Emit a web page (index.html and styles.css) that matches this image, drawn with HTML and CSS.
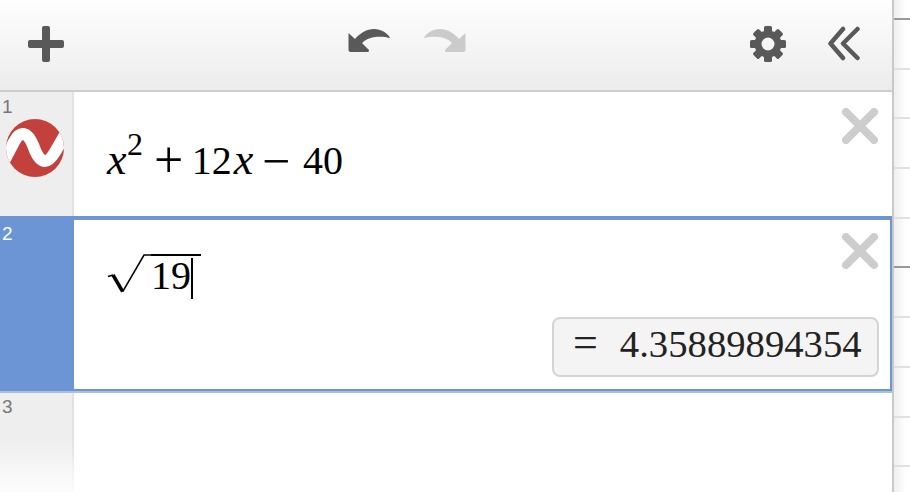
FILE: index.html
```html
<!DOCTYPE html>
<html lang="en">
<head>
<meta charset="utf-8">
<title>Expression list</title>
<link rel="stylesheet" href="styles.css">
</head>
<body>
<div class="app">
  <section class="panel">
    <header class="toolbar">
      <svg class="icon" width="36" height="36" viewBox="0 0 36 36"><path class="ink" d="M14 2a2 2 0 0 1 2-2h4a2 2 0 0 1 2 2v12h12a2 2 0 0 1 2 2v4a2 2 0 0 1-2 2H22v12a2 2 0 0 1-2 2h-4a2 2 0 0 1-2-2V22H2a2 2 0 0 1-2-2v-4a2 2 0 0 1 2-2h12z"/></svg>
      <div class="history">
        <svg class="icon" width="44" height="26" viewBox="0 0 44 26"><path class="ink" d="M1.500 5L8 11C13 5 20 1 27 1C34 1 40 5 43 9.500L42.500 10C38 8.500 33 8.500 28 9C23 9.500 18 12 15 15L22 22L21.500 24H3.500C2 24 1.500 23 1.500 21.500Z"/></svg>
        <svg class="icon" width="44" height="26" viewBox="0 0 44 26"><path class="ink-off" d="M42.500 5L36 11C31 5 24 1 17 1C10 1 4 5 1 9.500L1.500 10C6 8.500 11 8.500 16 9C21 9.500 26 12 29 15L22 22L22.500 24H40.500C42 24 42.500 23 42.500 21.500Z"/></svg>
      </div>
      <div class="tools">
        <svg class="icon" width="36" height="36" viewBox="0 0 36 36">
          <g class="ink">
            <rect x="14" y="0" width="8" height="8" rx="1.500"/>
            <rect x="14" y="0" width="8" height="8" rx="1.500" transform="rotate(45 18 18)"/>
            <rect x="14" y="0" width="8" height="8" rx="1.500" transform="rotate(90 18 18)"/>
            <rect x="14" y="0" width="8" height="8" rx="1.500" transform="rotate(135 18 18)"/>
            <rect x="14" y="0" width="8" height="8" rx="1.500" transform="rotate(180 18 18)"/>
            <rect x="14" y="0" width="8" height="8" rx="1.500" transform="rotate(225 18 18)"/>
            <rect x="14" y="0" width="8" height="8" rx="1.500" transform="rotate(270 18 18)"/>
            <rect x="14" y="0" width="8" height="8" rx="1.500" transform="rotate(315 18 18)"/>
          </g>
          <circle class="gear-ring" cx="18" cy="18" r="10"/>
        </svg>
        <svg class="icon" width="33" height="36" viewBox="0 0 33 36"><path class="chev" d="M15 3 2.500 17.500 15 32M29.500 3 15 17.500 29.500 32"/></svg>
      </div>
    </header>
    <div class="row row-1">
      <div class="gutter">
        <span class="num">1</span>
        <svg class="logo" width="58" height="58" viewBox="0 0 58 58"><defs><clipPath id="disc"><circle cx="29" cy="29" r="29"/></clipPath></defs><circle cx="29" cy="29" r="29" fill="#c4403c"/><path clip-path="url(#disc)" d="M-2 42L8 23C11 17 14 15 17 15C21 15 24 19 27 26C30 35 34 42 39 42C43 42 46 38 49 33L60 14" fill="none" stroke="#fff" stroke-width="12"/></svg>
      </div>
      <div class="body">
        <div class="math"><i class="var">x</i><span class="sup">2</span><span class="op plus-op">+</span><span class="num-12">12</span><i class="var var-2">x</i><span class="op minus-op">−</span><span class="num-40">40</span></div>
        <svg class="close" width="36" height="36" viewBox="0 0 36 36"><path d="M4 4l28 28M32 4 4 32"/></svg>
      </div>
    </div>
    <div class="row row-2">
      <div class="gutter"><span class="num">2</span></div>
      <div class="body">
        <div class="root">
          <svg class="radical" width="45" height="41" viewBox="0 0 45 41"><path class="rad-thin" d="M2 22.500 7 21M16.700 37.700 38 1H45"/><path class="rad-thick" d="M7 21 16.700 37.700"/></svg>
          <span class="radicand">19<span class="caret"></span></span>
        </div>
        <svg class="close close-2" width="36" height="36" viewBox="0 0 36 36"><path d="M4 4l28 28M32 4 4 32"/></svg>
        <div class="result"><span class="eq">=</span><span>4.35889894354</span></div>
      </div>
    </div>
    <div class="row row-3">
      <div class="gutter"><span class="num">3</span></div>
      <div class="body"></div>
    </div>
  </section>
  <aside class="grid">
    <div class="line major"></div><div class="line"></div><div class="line"></div><div class="line"></div><div class="line"></div>
    <div class="line major"></div><div class="line"></div><div class="line"></div><div class="line"></div><div class="line"></div>
  </aside>
</div>
</body>
</html>
```
FILE: styles.css
```css
* { box-sizing: border-box; }
html, body { margin: 0; height: 492px; overflow: hidden; background: #fff; }
.app { display: flex; width: 910px; height: 492px; }
.panel { width: 894px; flex: none; border-right: 2px solid #c9c9c9; display: flex; flex-direction: column; font-family: "Liberation Sans", Arial, sans-serif; }
.toolbar { height: 92px; flex: none; border-bottom: 2px solid #cdcdcd; background: linear-gradient(#fefefe, #ececec); display: flex; align-items: center; justify-content: space-between; padding: 0 31px 2px 28px; }
.icon { display: block; flex: none; }
.ink { fill: #595959; }
.ink-off { fill: #cbcbcb; }
.gear-ring { fill: none; stroke: #595959; stroke-width: 7; }
.chev { fill: none; stroke: #595959; stroke-width: 4.500; stroke-linecap: round; stroke-linejoin: round; }
.history { display: flex; gap: 32px; margin-bottom: 6px; }
.tools { display: flex; gap: 42px; align-items: center; }
.row { display: flex; flex: none; }
.row-1 { height: 124px; }
.row-2 { height: 175px; border-top: 4px solid #6b95d4; border-bottom: 2px solid #6b95d4; border-right: 2px solid #6b95d4; box-shadow: 0 2px 0 #a9bfe0; position: relative; z-index: 1; }
.row-3 { flex: 1; }
.gutter { width: 74px; flex: none; background: #eeeeee; border-right: 2px solid #e2e2e2; padding: 5px 0 0 2px; }
.num { display: block; font-size: 19px; line-height: 20px; color: #777; }
.logo { display: block; margin: 2px 0 0 4px; }
.row-2 .gutter { background: #6b95d4; border-right-color: #6b95d4; margin-top: -4px; margin-bottom: -2px; padding-top: 8px; }
.row-2 .num { color: #fff; }
.row-3 .gutter { padding-top: 6px; background: linear-gradient(#eeeeee 0, #eeeeee 50%, #fdfdfd 100%); border-image: linear-gradient(#e2e2e2 50%, #fdfdfd) 1; }
.body { flex: 1; position: relative; background: #fff; }
.math { font-family: "Liberation Serif", serif; font-size: 40px; line-height: 44px; color: #000; white-space: nowrap; display: flex; align-items: baseline; padding: 46px 0 0 33px; }
.var { font-size: 44px; }
.sup { font-size: 32px; line-height: 0; margin-left: 0.500px; transform: translateY(-19px); }
.op { line-height: 0; }
.plus-op { font-size: 52px; margin-left: 11px; transform: translateY(3px); }
.num-12 { margin-left: 8.500px; }
.var-2 { margin-left: 2px; }
.minus-op { font-size: 50px; margin-left: 8.500px; transform: translateY(4px); }
.num-40 { margin-left: 13px; }
.root { display: flex; align-items: flex-start; padding: 34px 0 0 32px; font-family: "Liberation Serif", serif; font-size: 40px; color: #000; }
.radical { display: block; flex: none; fill: none; stroke: #000; }
.rad-thin { stroke-width: 1.600; }
.rad-thick { stroke-width: 3.500; }
.radicand { position: relative; display: block; width: 50px; height: 41px; border-top: 2px solid #000; line-height: 39px; }
.caret { position: absolute; left: 40px; top: 2px; width: 2px; height: 41px; background: #000; }
.close { position: absolute; right: 14px; top: 16px; fill: none; stroke: #cdcdcd; stroke-width: 8; stroke-linecap: round; }
.close-2 { right: 12px; top: 13px; }
.result { position: absolute; right: 11px; bottom: 12px; width: 327px; height: 60px; border: 2px solid #d4d4d4; border-radius: 8px; background: #f4f4f4; font-family: "Liberation Serif", serif; font-size: 38.700px; line-height: 50px; color: #222; padding-left: 19px; white-space: nowrap; display: flex; align-items: baseline; }
.eq { font-size: 44px; line-height: 0; margin-right: 22px; }
.grid { flex: 1; display: flex; flex-direction: column; padding-top: 18px; background: linear-gradient(90deg, #efefef, #fff 12px); }
.line { height: 49.700px; flex: none; border-top: 2px solid #e0e0e0; }
.line.major { border-top-color: #999; }
```
